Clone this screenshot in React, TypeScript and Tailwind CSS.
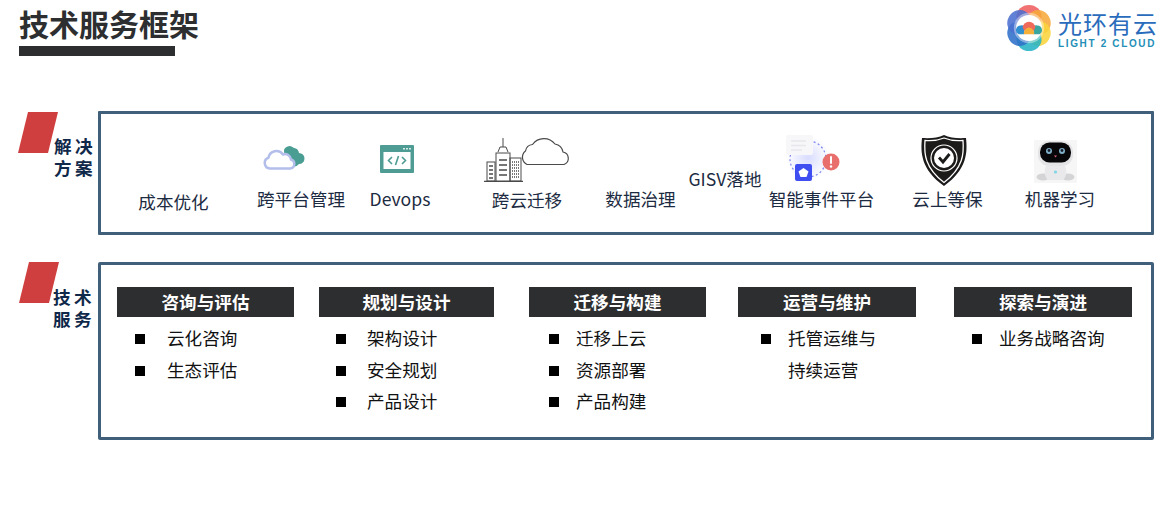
const FONT = "font-['Microsoft_YaHei','Noto_Sans_CJK_SC','Noto_Sans',sans-serif]";

const petals: [number, string][] = [
  [0, "#ef5f5f"],
  [60, "#f7a93a"],
  [120, "#f9d43c"],
  [180, "#25b3c6"],
  [240, "#2f6fc8"],
  [300, "#4a6fd0"],
];

function Logo() {
  return (
    <svg width="46" height="46" viewBox="1 1 44 44" fill="none">
      {petals.map(([a, c]) => (
        <ellipse key={a} cx="23" cy="12" rx="12" ry="11" fill={c} opacity="0.88" transform={`rotate(${a} 23 23)`} />
      ))}
      <circle cx="23" cy="23" r="14.500" fill="#fff" opacity="0.4" />
      <circle cx="23" cy="23" r="12.500" fill="#fff" />
      <path d="M13 29a4.500 4.500 0 0 1 2-8.500 4.500 4.500 0 0 1 3.500.5V29z" fill="#2f8fd0" />
      <path d="M33 29a4.500 4.500 0 0 0-2-8.500 4.500 4.500 0 0 0-3.500.5V29z" fill="#3aa6a0" />
      <path d="M17 23a6 6 0 0 1 12 0l-2 3h-8z" fill="#ee6a5a" />
      <path d="M18 29a5 6.500 0 0 1 10 0z" fill="#f4b03a" />
    </svg>
  );
}

function HybridCloud() {
  return (
    <svg width="42" height="28" viewBox="0 0 42 28" fill="none">
      <path d="M21 5a6 6 0 0 1 10-2 6 6 0 0 1 5 5 5.500 5.500 0 0 1 0 11 8 8 0 0 1-6 3H22z" fill="#4a9d92" />
      <path d="M7 23.500a5.500 5.500 0 0 1-1.500-10.700A8 8 0 0 1 20 9.500a6 6 0 0 1 8 5 4.600 4.600 0 0 1-1 9z" fill="#fff" stroke="#b3bfea" strokeWidth="2.500" strokeLinejoin="round" />
    </svg>
  );
}

function DevopsIcon() {
  return (
    <svg width="34" height="28" viewBox="0 0 34 28" fill="none">
      <rect width="34" height="28" rx="1" fill="#4f9c95" />
      <rect x="3.500" y="7" width="27" height="17" fill="#fff" />
      <g fill="#d6ebe8">
        <rect x="23" y="3" width="2" height="1.500" />
        <rect x="26" y="3" width="2" height="1.500" />
        <rect x="29" y="3" width="2" height="1.500" />
      </g>
      <path d="M12 12l-3.500 3.500L12 19M22 12l3.500 3.500L22 19M18.500 11l-3 9" stroke="#4f9c95" strokeWidth="1.600" />
    </svg>
  );
}

function CityCloud() {
  return (
    <svg width="86" height="46" viewBox="0 0 86 46" fill="none" stroke="#4a4a4a" strokeWidth="1">
      <path d="M44 28.500h-1a8 8 0 0 1-1.500-13.500 8 8 0 0 1 7-6.500A14 14 0 0 1 71 8a10 10 0 0 1 8 8 6.500 6.500 0 0 1 1 12.500z" strokeWidth="1.200" />
      <path d="M0 45.500h39" strokeWidth="1.500" />
      <rect x="3" y="26" width="8" height="19" />
      <rect x="12" y="17" width="14" height="28" fill="#fff" />
      <rect x="26" y="22" width="11" height="23" />
      <path d="M14 16l2-5h6l2 5M19 11V2" />
      <path d="M15 24h8M15 29h8M15 34h8M15 39h8M5 30h4M5 34h4M5 38h4M5 42h4" strokeWidth="1.300" />
      <path d="M28 26h7M28 29h7M28 32h7M28 35h7M28 38h7M28 41h7" strokeWidth="1.300" strokeDasharray="1 1" />
    </svg>
  );
}

function AlarmIcon() {
  return (
    <svg width="56" height="48" viewBox="0 0 56 48" fill="none">
      <defs>
        <radialGradient id="glow">
          <stop offset="0%" stopColor="#d9dcff" />
          <stop offset="100%" stopColor="#ffffff" />
        </radialGradient>
      </defs>
      <circle cx="24" cy="23" r="22" fill="url(#glow)" />
      <circle cx="24" cy="24" r="18" stroke="#7b84ee" strokeWidth="1.200" strokeDasharray="2 2.500" />
      <rect x="2" y="0" width="27" height="20" rx="2" fill="#f7f7fa" />
      <path d="M7 6h15M7 10.500h15M7 15h11" stroke="#e6e6ec" strokeWidth="1.500" />
      <rect x="11" y="29" width="17" height="17" rx="2" fill="#3f4ef0" />
      <path d="M19.500 33l5 3.500-2 5.500h-6l-2-5.500z" fill="#fff" />
      <circle cx="47" cy="27" r="8.500" fill="#e86f6b" />
      <rect x="46" y="21" width="2" height="8" rx="1" fill="#fff" />
      <circle cx="47" cy="31.500" r="1.200" fill="#fff" />
    </svg>
  );
}

function ShieldIcon() {
  return (
    <svg width="48" height="53" viewBox="0 0 48 53" fill="none">
      <path d="M24 1c6 3 14 3.500 22 3 1.500 14 1.500 31-22 48C.5 35 .5 18 2 4c8 .5 16 0 22-3z" fill="#1c1b1a" />
      <path d="M24 4c6 2.500 13 3 19 2.500 1 13 .5 27-19 42C4.500 33.500 4 19.500 5 6.500 11 7 18 6.500 24 4z" stroke="#fff" strokeWidth="1.300" />
      <circle cx="24" cy="24" r="13" stroke="#fff" strokeWidth="1.200" />
      <circle cx="24" cy="24" r="10" fill="#fff" />
      <path d="M19 23.500l4 4.500 6.500-8" stroke="#1c1b1a" strokeWidth="2.800" />
    </svg>
  );
}

function RobotIcon() {
  return (
    <svg width="43" height="43" viewBox="0 0 43 43" fill="none">
      <rect width="43" height="43" fill="#f6f6f6" />
      <ellipse cx="9" cy="37" rx="6.500" ry="3.500" fill="#d4d4d6" />
      <ellipse cx="34" cy="37" rx="6.500" ry="3.500" fill="#d4d4d6" />
      <path d="M12 26h19c2 4 2 10-2 14H14c-4-4-4-10-2-14z" fill="#e9e9eb" />
      <rect x="4" y="1" width="35" height="25" rx="11" fill="#e4e4e6" />
      <rect x="6" y="2.500" width="31" height="20" rx="9.500" fill="#070709" />
      <circle cx="15" cy="11" r="3" fill="#7fb0c8" />
      <circle cx="28" cy="11" r="3" fill="#7fb0c8" />
      <circle cx="15" cy="10.500" r="1.400" fill="#161a26" />
      <circle cx="28" cy="10.500" r="1.400" fill="#161a26" />
      <path d="M20 15.500h3l-1.500 2z" fill="#d8607a" />
      <circle cx="21.500" cy="32" r="1.600" fill="#7fd6e6" />
    </svg>
  );
}

type Sol = { label: string; ml: string; w: string; lift: string; icon?: React.ReactNode; iconBox?: string };

const solutions: Sol[] = [
  { label: "成本优化", ml: "ml-[37px]", w: "w-[71px]", lift: "-mb-[3px]" },
  { label: "跨平台管理", ml: "ml-[48px]", w: "w-[88px]", lift: "mb-0", icon: <HybridCloud />, iconBox: "self-start ml-[6px] mb-[14px]" },
  { label: "Devops", ml: "ml-[24px]", w: "w-[62px]", lift: "mb-0", icon: <DevopsIcon />, iconBox: "self-start ml-[11px] mb-[14px]" },
  { label: "跨云迁移", ml: "ml-[53px]", w: "w-[86px]", lift: "-mb-px", icon: <CityCloud />, iconBox: "mb-[6px]" },
  { label: "数据治理", ml: "ml-[35px]", w: "w-[71px]", lift: "mb-0" },
  { label: "GISV落地", ml: "ml-[11px]", w: "w-[76px]", lift: "mb-[20px]" },
  { label: "智能事件平台", ml: "ml-[6px]", w: "w-[105px]", lift: "mb-0", icon: <AlarmIcon />, iconBox: "self-start ml-[15px] mb-[4px]" },
  { label: "云上等保", ml: "ml-[38px]", w: "w-[71px]", lift: "mb-0", icon: <ShieldIcon />, iconBox: "self-start ml-[8px] mb-0" },
  { label: "机器学习", ml: "ml-[42px]", w: "w-[70px]", lift: "mb-0", icon: <RobotIcon />, iconBox: "self-start ml-[9px] mb-[4px]" },
];

type Col = { title: string; ml: string; w: string; bullet: string; gap: string; items: string[][] };

const cols: Col[] = [
  { title: "咨询与评估", ml: "ml-[16px]", w: "w-[177px]", bullet: "ml-[18px]", gap: "mr-[22px]", items: [["云化咨询"], ["生态评估"]] },
  { title: "规划与设计", ml: "ml-[25px]", w: "w-[175px]", bullet: "ml-[17px]", gap: "mr-[21px]", items: [["架构设计"], ["安全规划"], ["产品设计"]] },
  { title: "迁移与构建", ml: "ml-[35px]", w: "w-[177px]", bullet: "ml-[20px]", gap: "mr-[17px]", items: [["迁移上云"], ["资源部署"], ["产品构建"]] },
  { title: "运营与维护", ml: "ml-[32px]", w: "w-[178px]", bullet: "ml-[23px]", gap: "mr-[17px]", items: [["托管运维与", "持续运营"]] },
  { title: "探索与演进", ml: "ml-[38px]", w: "w-[178px]", bullet: "ml-[18px]", gap: "mr-[17px]", items: [["业务战略咨询"]] },
];

function SideLabel({ lines, shape, text }: { lines: string[]; shape: string; text: string }) {
  return (
    <div className="w-[98px] shrink-0">
      <div className={`h-[41px] w-[40px] bg-[#cf3f3f] [clip-path:polygon(25%_0,100%_0,75%_100%,0_100%)] ${shape}`} />
      <div className={`text-[17.600px] leading-[22px] font-bold tracking-[3.500px] text-[#10294a] whitespace-nowrap font-['Liberation_Sans','Noto_Sans_CJK_SC',sans-serif] ${text}`}>
        {lines.map((l) => (
          <div key={l}>{l}</div>
        ))}
      </div>
    </div>
  );
}

export default function App() {
  return (
    <div className={`w-[1170px] h-[506px] bg-white overflow-hidden ${FONT}`}>
      <header className="flex justify-between items-start pl-[19px] pr-[12px] h-[56px]">
        <div>
          <h1 className="text-[30px] leading-[34px] font-bold text-[#2d2e30] mt-[6px]">技术服务框架</h1>
          <div className="w-[156px] h-[10px] bg-[#2d2e30] mt-[6px]" />
        </div>
        <div className="flex items-start mt-[5px]">
          <Logo />
          <div className="ml-[6px] mt-[5px] flex flex-col">
            <span className="text-[24px] leading-[26px] text-[#2a6cbc] tracking-[1px] whitespace-nowrap">光环有云</span>
            <span className="text-[10px] leading-[12px] mt-[2px] font-bold text-[#1f8fb8] tracking-[1.650px] whitespace-nowrap font-['Liberation_Sans',sans-serif]">LIGHT 2 CLOUD</span>
          </div>
        </div>
      </header>

      <section className="flex items-start mt-[55px]">
        <SideLabel lines={["解决", "方案"]} shape="ml-[18px] mt-px" text="-mt-[17px] ml-[54px]" />
        <div className="w-[1056px] h-[124px] border-[3px] border-[#3f5f7a] rounded-[1px] flex items-end pb-[21px]">
          {solutions.map((s) => (
            <div key={s.label} className={`flex flex-col items-center shrink-0 ${s.ml} ${s.w} ${s.lift}`}>
              {s.icon && <div className={`flex leading-none ${s.iconBox}`}>{s.icon}</div>}
              <span className="text-[17.600px] leading-[24px] text-[#1c2b42] whitespace-nowrap">{s.label}</span>
            </div>
          ))}
        </div>
      </section>

      <section className="flex items-start mt-[27px]">
        <SideLabel lines={["技术", "服务"]} shape="ml-[19px]" text="-mt-[16px] ml-[53px]" />
        <div className="w-[1056px] h-[178px] border-[3px] border-[#3f5f7a] rounded-[2px] flex items-start pt-[22px]">
          {cols.map((c) => (
            <div key={c.title} className={`shrink-0 ${c.ml} ${c.w}`}>
              <div className="h-[30px] bg-[#2d2e30] flex items-center justify-center text-[17.600px] font-bold text-white">
                {c.title}
              </div>
              <ul className="mt-[5px]">
                {c.items.map((lines) => (
                  <li key={lines[0]} className={`flex items-start ${c.bullet}`}>
                    <span className={`w-[10px] h-[10px] bg-black shrink-0 mt-[12px] ${c.gap}`} />
                    <div className="text-[17.600px] leading-[31.500px] text-[#111] whitespace-nowrap">
                      {lines.map((l) => (
                        <div key={l}>{l}</div>
                      ))}
                    </div>
                  </li>
                ))}
              </ul>
            </div>
          ))}
        </div>
      </section>
    </div>
  );
}
